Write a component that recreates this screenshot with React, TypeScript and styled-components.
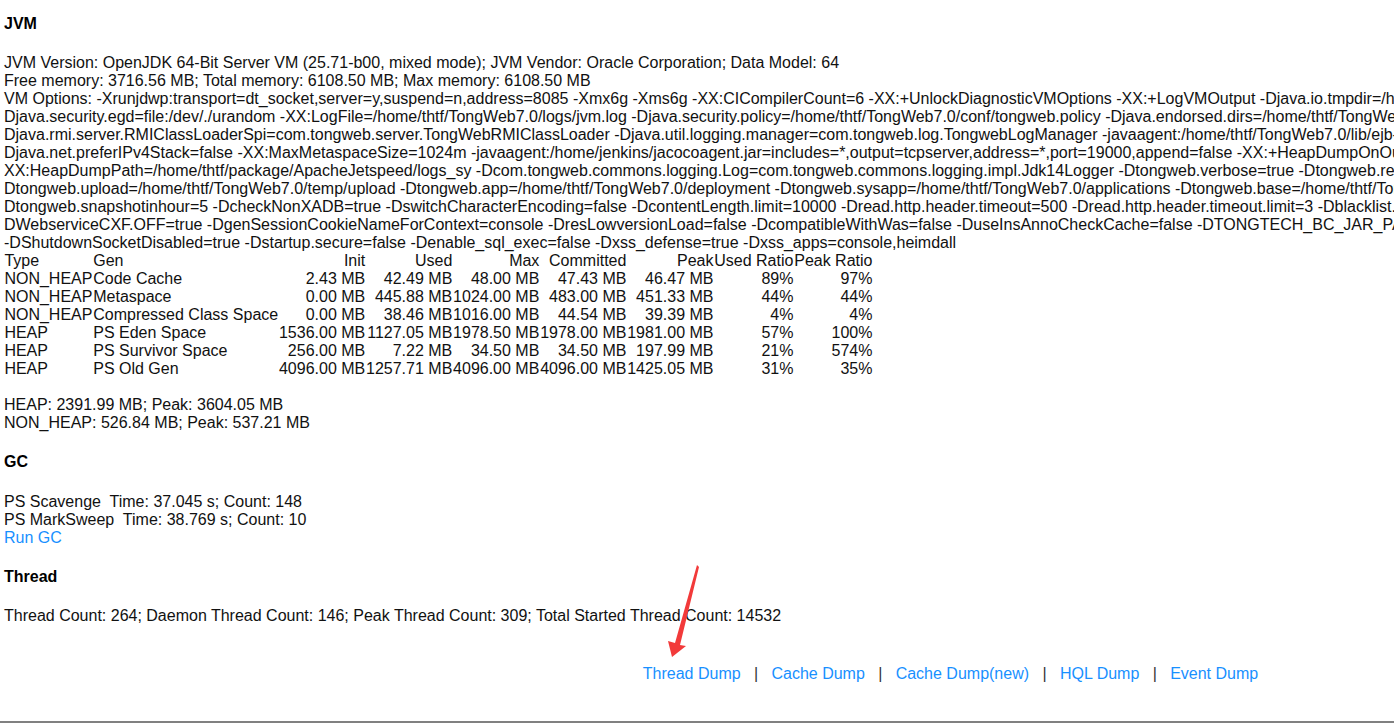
import React from "react";
import styled, { createGlobalStyle } from "styled-components";

const Global = createGlobalStyle`
  html, body { margin: 0; padding: 0; background: #fff; overflow: hidden; }
  body { font-family: "Liberation Sans", Arial, sans-serif; font-size: 16px; color: #111; }
`;

const Page = styled.div`
  position: relative;
  width: 1394px;
  height: 721px;
  overflow: hidden;
  border-bottom: 2px solid #808080;
`;

const Content = styled.div`
  width: 1893px;
  padding: 1px 4px 0;
  line-height: 18px;
`;

const Heading = styled.h4<{ $first?: boolean }>`
  margin: ${(p) => (p.$first ? "14px 0 21px" : "21px 0 21.6px")};
  font-size: 16px;
  font-weight: bold;
  line-height: 18px;
  color: #000;
`;

const Line = styled.div`
  white-space: nowrap;
  line-height: 18px;
`;

const Blank = styled.div`
  height: 18px;
`;

const Table = styled.table`
  border-collapse: collapse;
  border-spacing: 0;
  font-size: 16px;
  line-height: 18px;
`;

const Cell = styled.td<{ $right?: boolean }>`
  padding: 0 0.4px;
  white-space: nowrap;
  font-weight: normal;
  text-align: ${(p) => (p.$right ? "right" : "left")};
  height: 18px;
`;

const Link = styled.a`
  color: #1890ff;
  text-decoration: none;
  cursor: pointer;
`;

const LinkBar = styled.div`
  margin-top: 40px;
  text-align: center;
  white-space: nowrap;
  line-height: 18px;
`;

const Sep = styled.span`
  color: #333;
`;

const Arrow = styled.svg`
  position: absolute;
  left: 0;
  top: 0;
  pointer-events: none;
`;

const vmLines = [
  "JVM Version: OpenJDK 64-Bit Server VM (25.71-b00, mixed mode); JVM Vendor: Oracle Corporation; Data Model: 64",
  "Free memory: 3716.56 MB; Total memory: 6108.50 MB; Max memory: 6108.50 MB",
  "VM Options: -Xrunjdwp:transport=dt_socket,server=y,suspend=n,address=8085 -Xmx6g -Xms6g -XX:CICompilerCount=6 -XX:+UnlockDiagnosticVMOptions -XX:+LogVMOutput -Djava.io.tmpdir=/home/thtf/TongWeb7.0/temp -",
  "Djava.security.egd=file:/dev/./urandom -XX:LogFile=/home/thtf/TongWeb7.0/logs/jvm.log -Djava.security.policy=/home/thtf/TongWeb7.0/conf/tongweb.policy -Djava.endorsed.dirs=/home/thtf/TongWeb7.0/endorsed -",
  "Djava.rmi.server.RMIClassLoaderSpi=com.tongweb.server.TongWebRMIClassLoader -Djava.util.logging.manager=com.tongweb.log.TongwebLogManager -javaagent:/home/thtf/TongWeb7.0/lib/ejb-agent.jar -",
  "Djava.net.preferIPv4Stack=false -XX:MaxMetaspaceSize=1024m -javaagent:/home/jenkins/jacocoagent.jar=includes=*,output=tcpserver,address=*,port=19000,append=false -XX:+HeapDumpOnOutOfMemoryError -",
  "XX:HeapDumpPath=/home/thtf/package/ApacheJetspeed/logs_sy -Dcom.tongweb.commons.logging.Log=com.tongweb.commons.logging.impl.Jdk14Logger -Dtongweb.verbose=true -Dtongweb.recover=true -",
  "Dtongweb.upload=/home/thtf/TongWeb7.0/temp/upload -Dtongweb.app=/home/thtf/TongWeb7.0/deployment -Dtongweb.sysapp=/home/thtf/TongWeb7.0/applications -Dtongweb.base=/home/thtf/TongWeb7.0 -",
  "Dtongweb.snapshotinhour=5 -DcheckNonXADB=true -DswitchCharacterEncoding=false -DcontentLength.limit=10000 -Dread.http.header.timeout=500 -Dread.http.header.timeout.limit=3 -Dblacklist.enable=true -",
  "DWebserviceCXF.OFF=true -DgenSessionCookieNameForContext=console -DresLowversionLoad=false -DcompatibleWithWas=false -DuseInsAnnoCheckCache=false -DTONGTECH_BC_JAR_PATH=/home/thtf/TongWeb7.0/lib -",
  "-DShutdownSocketDisabled=true -Dstartup.secure=false -Denable_sql_exec=false -Dxss_defense=true -Dxss_apps=console,heimdall",
];

const header = ["Type", "Gen", "Init", "Used", "Max", "Committed", "Peak", "Used Ratio", "Peak Ratio"];
const rows = [
  ["NON_HEAP", "Code Cache", "2.43 MB", "42.49 MB", "48.00 MB", "47.43 MB", "46.47 MB", "89%", "97%"],
  ["NON_HEAP", "Metaspace", "0.00 MB", "445.88 MB", "1024.00 MB", "483.00 MB", "451.33 MB", "44%", "44%"],
  ["NON_HEAP", "Compressed Class Space", "0.00 MB", "38.46 MB", "1016.00 MB", "44.54 MB", "39.39 MB", "4%", "4%"],
  ["HEAP", "PS Eden Space", "1536.00 MB", "1127.05 MB", "1978.50 MB", "1978.00 MB", "1981.00 MB", "57%", "100%"],
  ["HEAP", "PS Survivor Space", "256.00 MB", "7.22 MB", "34.50 MB", "34.50 MB", "197.99 MB", "21%", "574%"],
  ["HEAP", "PS Old Gen", "4096.00 MB", "1257.71 MB", "4096.00 MB", "4096.00 MB", "1425.05 MB", "31%", "35%"],
];

const links = ["Thread Dump", "Cache Dump", "Cache Dump(new)", "HQL Dump", "Event Dump"];

export default function App() {
  return (
    <Page>
      <Global />
      <Content>
        <Heading $first>JVM</Heading>
        {vmLines.map((l, i) => (
          <Line key={i}>{l}</Line>
        ))}
        <Table>
          <thead>
            <tr>
              {header.map((h, i) => (
                <Cell as="th" key={h} $right={i >= 2}>
                  {h}
                </Cell>
              ))}
            </tr>
          </thead>
          <tbody>
            {rows.map((r, ri) => (
              <tr key={ri}>
                {r.map((c, ci) => (
                  <Cell key={ci} $right={ci >= 2}>
                    {c}
                  </Cell>
                ))}
              </tr>
            ))}
          </tbody>
        </Table>
        <Blank />
        <Line>HEAP: 2391.99 MB; Peak: 3604.05 MB</Line>
        <Line>NON_HEAP: 526.84 MB; Peak: 537.21 MB</Line>

        <Heading>GC</Heading>
        <Line>PS Scavenge&nbsp; Time: 37.045 s; Count: 148</Line>
        <Line>PS MarkSweep&nbsp; Time: 38.769 s; Count: 10</Line>
        <Line>
          <Link>Run GC</Link>
        </Line>

        <Heading>Thread</Heading>
        <Line>Thread Count: 264; Daemon Thread Count: 146; Peak Thread Count: 309; Total Started Thread Count: 14532</Line>

        <LinkBar>
          {links.map((l, i) => (
            <React.Fragment key={l}>
              {i > 0 && <Sep>&nbsp;&nbsp;&nbsp;|&nbsp;&nbsp;&nbsp;</Sep>}
              <Link>{l}</Link>
            </React.Fragment>
          ))}
        </LinkBar>
      </Content>
      <Arrow width="1394" height="723" viewBox="0 0 1394 723">
        <polygon
          points="697,565 699,567 680,645 686,646 672,657 668,641 675,643"
          fill="#f23a3a"
        />
      </Arrow>
    </Page>
  );
}
